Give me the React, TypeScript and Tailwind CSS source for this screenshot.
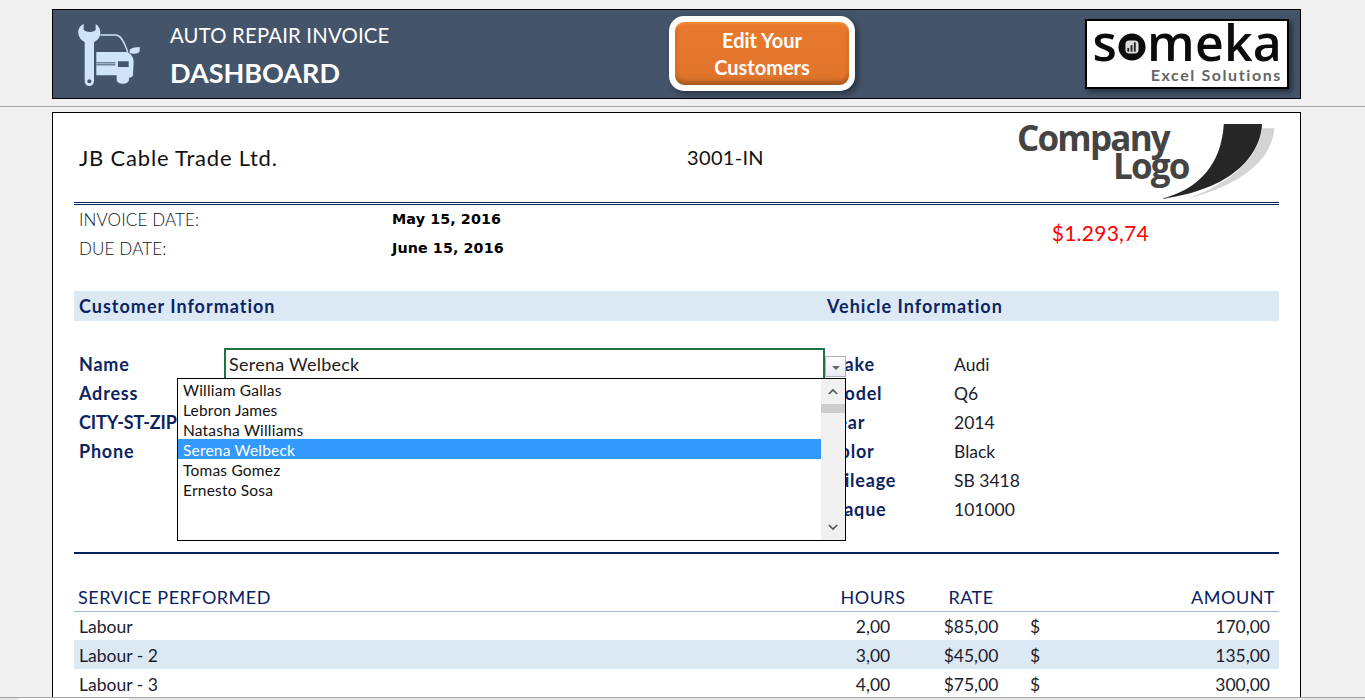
import React from "react";

const font = { fontFamily: "Lato, 'Open Sans', sans-serif" };

function WrenchCar() {
  return (
    <svg viewBox="80 65 195 195" className="w-[65px] h-[65px] shrink-0" fill="#cfe4f8">
      <path d="M100 71 C88 76 82 88 84 100 C86 112 94 121 103 125 L103 243 A14 14 0 0 0 131 243 L131 125 C142 120 150 110 150 97 C150 87 146 78 136 71 L136 88 C130 97 108 97 100 88 Z" />
      <circle cx="117" cy="243" r="6" fill="#44546a" />
      <path d="M150 104 L195 104 C212 104 222 125 232 155" fill="none" stroke="#cfe4f8" strokeWidth="4" />
      <path d="M138 155 L232 155 C244 162 250 172 250 185 L248 225 C246 232 238 232 236 232 L236 238 C235 254 200 254 199 238 L199 225 L138 225 Z" />
      <path d="M238 148 C244 142 256 140 268 140 L268 152 C266 160 250 162 238 158 Z" />
      <rect x="138" y="186" width="57" height="3" fill="#44546a" />
      <rect x="138" y="192" width="57" height="3" fill="#44546a" />
      <rect x="203" y="183" width="32" height="17" fill="#44546a" />
    </svg>
  );
}

function SomekaLogo() {
  return (
    <div className="ml-auto w-[204px] h-[70px] bg-white border-2 border-black shadow-[3px_3px_5px_rgba(0,0,0,0.45)] flex flex-col items-end pr-[5px]">
      <div className="flex items-center h-[44px] mt-[-1px] text-[50px] leading-none text-[#0c0c0c] font-semibold tracking-[0.2px]" style={{ fontFamily: "'Open Sans', sans-serif" }}>
        <span>s</span>
        <svg viewBox="0 0 30 30" className="w-[28px] h-[28px] mt-[9px] mx-[1px]">
          <circle cx="15" cy="15" r="14.5" fill="#0c0c0c" />
          <rect x="8" y="8" width="14" height="14" rx="4" fill="#ddd" />
          <rect x="10" y="16" width="2" height="4" fill="#222" />
          <rect x="13.5" y="13" width="2" height="7" fill="#222" />
          <rect x="17" y="10" width="2" height="10" fill="#222" />
        </svg>
        <span>meka</span>
      </div>
      <div className="text-[16px] leading-[18px] mt-[2px] font-bold text-[#666] tracking-[1.6px]" style={font}>Excel Solutions</div>
    </div>
  );
}

function CompanyLogo() {
  return (
    <div className="relative w-[262px] h-[89px] text-[#444]" style={{ fontFamily: "'Open Sans', sans-serif" }}>
      <div className="text-[35px] leading-[29px] font-bold tracking-[-1.8px] pt-[10px]">Company</div>
      <div className="text-[35px] leading-[28px] font-bold tracking-[-1.8px] ml-[96px]">Logo</div>
      <svg viewBox="480 40 346 230" className="absolute left-[143px] top-[10px] w-[115px] h-[77px]">
        <path d="M787 55 L824 55 C818 130 760 215 560 268 C650 235 720 190 760 130 C775 105 785 80 787 55 Z" fill="#d4d4d4" />
        <path d="M672 42 L787 42 C785 110 730 235 480 268 C600 240 665 160 672 42 Z" fill="#262626" />
      </svg>
    </div>
  );
}

const names = ["William Gallas", "Lebron James", "Natasha Williams", "Serena Welbeck", "Tomas Gomez", "Ernesto Sosa"];
const custLabels = ["Name", "Adress", "CITY-ST-ZIP", "Phone"];
const vehicle = [
  ["Make", "Audi"],
  ["Model", "Q6"],
  ["Year", "2014"],
  ["Color", "Black"],
  ["Mileage", "SB 3418"],
  ["Plaque", "101000"],
];
const rows = [
  ["Labour", "2,00", "$85,00", "170,00"],
  ["Labour - 2", "3,00", "$45,00", "135,00"],
  ["Labour - 3", "4,00", "$75,00", "300,00"],
];

function ComboDropdown() {
  return (
    <>
      <div className="absolute left-[171px] top-[235px] w-[601px] h-[32px] bg-white border-2 border-[#217346] pl-[3px] text-[18px] leading-[28px] text-[#1c1c1c] tracking-[0.25px]">
        Serena Welbeck
      </div>
      <div className="absolute left-[772px] top-[243px] w-[21px] h-[21px] border border-[#a8b0c0] bg-gradient-to-b from-white to-[#e8eaf0] flex items-center justify-center">
        <div className="mt-[2px] w-0 h-0 border-l-[4px] border-r-[4px] border-t-[4px] border-l-transparent border-r-transparent border-t-[#666]" />
      </div>
      <div className="absolute left-[124px] top-[265px] w-[669px] h-[163px] bg-white border border-black flex">
        <div className="flex-1">
          {names.map((n) => (
            <div key={n} className={`h-[20px] pl-[5px] text-[15.5px] leading-[22px] tracking-[0.2px] ${n === "Serena Welbeck" ? "bg-[#3399ff] text-white" : "text-[#111]"}`}>
              {n}
            </div>
          ))}
        </div>
        <div className="w-[24px] bg-[#f0f0f0] flex flex-col items-center">
          <svg viewBox="0 0 12 8" className="w-[10px] h-[7px] mt-[9px]" fill="none" stroke="#555" strokeWidth="2"><path d="M1 7 L6 2 L11 7" /></svg>
          <div className="w-full h-[9px] bg-[#cdcdcd] mt-[9px]" />
          <svg viewBox="0 0 12 8" className="w-[10px] h-[7px] mt-auto mb-[9px]" fill="none" stroke="#555" strokeWidth="2"><path d="M1 1 L6 6 L11 1" /></svg>
        </div>
      </div>
    </>
  );
}

export default function App() {
  return (
    <div className="h-[700px] w-[1365px] overflow-hidden bg-[#f0f0f0] flex flex-col" style={font}>
      <header className="mt-[9px] mx-[52px] w-[1249px] h-[90px] shrink-0 bg-[#44546a] border border-black flex items-center pl-[24px] pr-[11px] text-white">
        <WrenchCar />
        <div className="ml-[28px] w-[499px] flex flex-col pt-[2px]">
          <div className="text-[20.3px] leading-[30px] tracking-[0.2px]">AUTO REPAIR INVOICE</div>
          <div className="text-[27px] leading-[36px] font-bold mt-[5px]">DASHBOARD</div>
        </div>
        <button className="w-[186px] h-[75px] mb-[2px] pt-[2px] rounded-[15px] border-[6px] border-white bg-gradient-to-b from-[#e77a2e] via-[#e5772d] to-[#df732b] shadow-[inset_0_2px_2px_#f98a36,inset_0_-4px_4px_#a85a1e,3px_3px_6px_rgba(0,0,0,0.4)] text-white font-bold text-[20px] leading-[27px]">
          Edit Your
          <br />
          Customers
        </button>
        <SomekaLogo />
      </header>

      <div className="mt-[7px] h-px shrink-0 bg-[#a6a6a6]" />

      <main className="mt-[5px] mx-[52px] w-[1249px] flex-1 min-h-0 bg-white border border-b-0 border-black overflow-hidden pl-[21px] pr-[21px] relative">
        <div className="h-[89px] flex items-center">
          <div className="w-[5px]" />
          <div className="w-[526px] text-[22px] tracking-[0.8px] text-[#111]">JB Cable Trade Ltd.</div>
          <div className="w-[240px] mb-[2px] pl-[1px] text-[20px] text-[#111] tracking-[0.3px] text-center">3001-IN</div>
          <div className="ml-auto"><CompanyLogo /></div>
        </div>
        <div className="h-[3px] border-t-[3px] border-double border-[#002060]" />

        <div className="flex items-center text-[#111122]">
          <div className="pl-[5px]">
            <div className="flex h-[29px] items-center">
              <div className="w-[313px] text-[17px] font-light tracking-[0.15px]">INVOICE DATE:</div>
              <div className="text-[14.3px] font-bold text-black tracking-[0.1px]" style={{ fontFamily: "'DejaVu Sans', sans-serif" }}>May 15, 2016</div>
            </div>
            <div className="flex h-[29px] items-center">
              <div className="w-[313px] text-[17px] font-light tracking-[0.15px]">DUE DATE:</div>
              <div className="text-[14.3px] font-bold text-black tracking-[0.1px]" style={{ fontFamily: "'DejaVu Sans', sans-serif" }}>June 15, 2016</div>
            </div>
          </div>
          <div className="ml-[548px] mb-[3px] text-[21px] text-[#ff0000] tracking-[0.25px]">$1.293,74</div>
        </div>

        <div className="mt-[28px] h-[30px] bg-[#dce9f5] flex items-center text-[#0c2461] text-[18px] font-bold tracking-[1px]">
          <div className="pl-[5px] w-[749px]">Customer Information</div>
          <div className="pl-[4px]">Vehicle Information</div>
        </div>

        <div className="mt-[29px] flex text-[18px]">
          <div className="w-[753px] pl-[5px]">
            {custLabels.map((l) => (
              <div key={l} className={`h-[29px] leading-[29px] text-[#0c2461] font-bold ${l === "CITY-ST-ZIP" ? "tracking-[-0.1px]" : "tracking-[0.8px]"}`}>{l}</div>
            ))}
          </div>
          <div className="flex-1">
            {vehicle.map(([k, v]) => (
              <div key={k} className="h-[29px] leading-[29px] flex">
                <div className="w-[127px] font-bold text-[#0c2461] tracking-[0.8px]">{k}</div>
                <div className="text-[#1c1c2c] text-[17.5px] tracking-[0px]">{v}</div>
              </div>
            ))}
          </div>
        </div>

        <ComboDropdown />

        <div className="mt-[28px] h-[2px] bg-[#002060]" />

        <div className="mt-[28px] pt-[2px] h-[30px] border-b border-[#9db8dc] grid grid-cols-[756px_86px_110px_24px_229px] items-center text-[18px] text-[#0a2060] tracking-[0.5px]">
          <div className="pl-[4px]">SERVICE PERFORMED</div>
          <div className="text-center">HOURS</div>
          <div className="text-center">RATE</div>
          <div />
          <div className="text-right pr-[4px]">AMOUNT</div>
        </div>
        {rows.map((r, i) => (
          <div key={r[0]} className={`grid grid-cols-[756px_86px_110px_24px_229px] items-center text-[17.5px] text-[#1c1c2c] ${i === 0 ? "h-[28px] pt-[2px]" : "h-[29px] pt-[3px]"} ${i === 1 ? "bg-[#dce9f5]" : ""}`}>
            <div className="pl-[5px]">{r[0]}</div>
            <div className="text-center">{r[1]}</div>
            <div className="text-center">{r[2]}</div>
            <div className="pl-[4px]">$</div>
            <div className="text-right pr-[9px]">{r[3]}</div>
          </div>
        ))}
      </main>

      <div className="h-[3px] shrink-0 flex border-t border-[#a6a6a6] bg-[#e6e6e6]">
        <div className="w-[19px]" />
        <div className="w-[110px] bg-white" />
      </div>
    </div>
  );
}
